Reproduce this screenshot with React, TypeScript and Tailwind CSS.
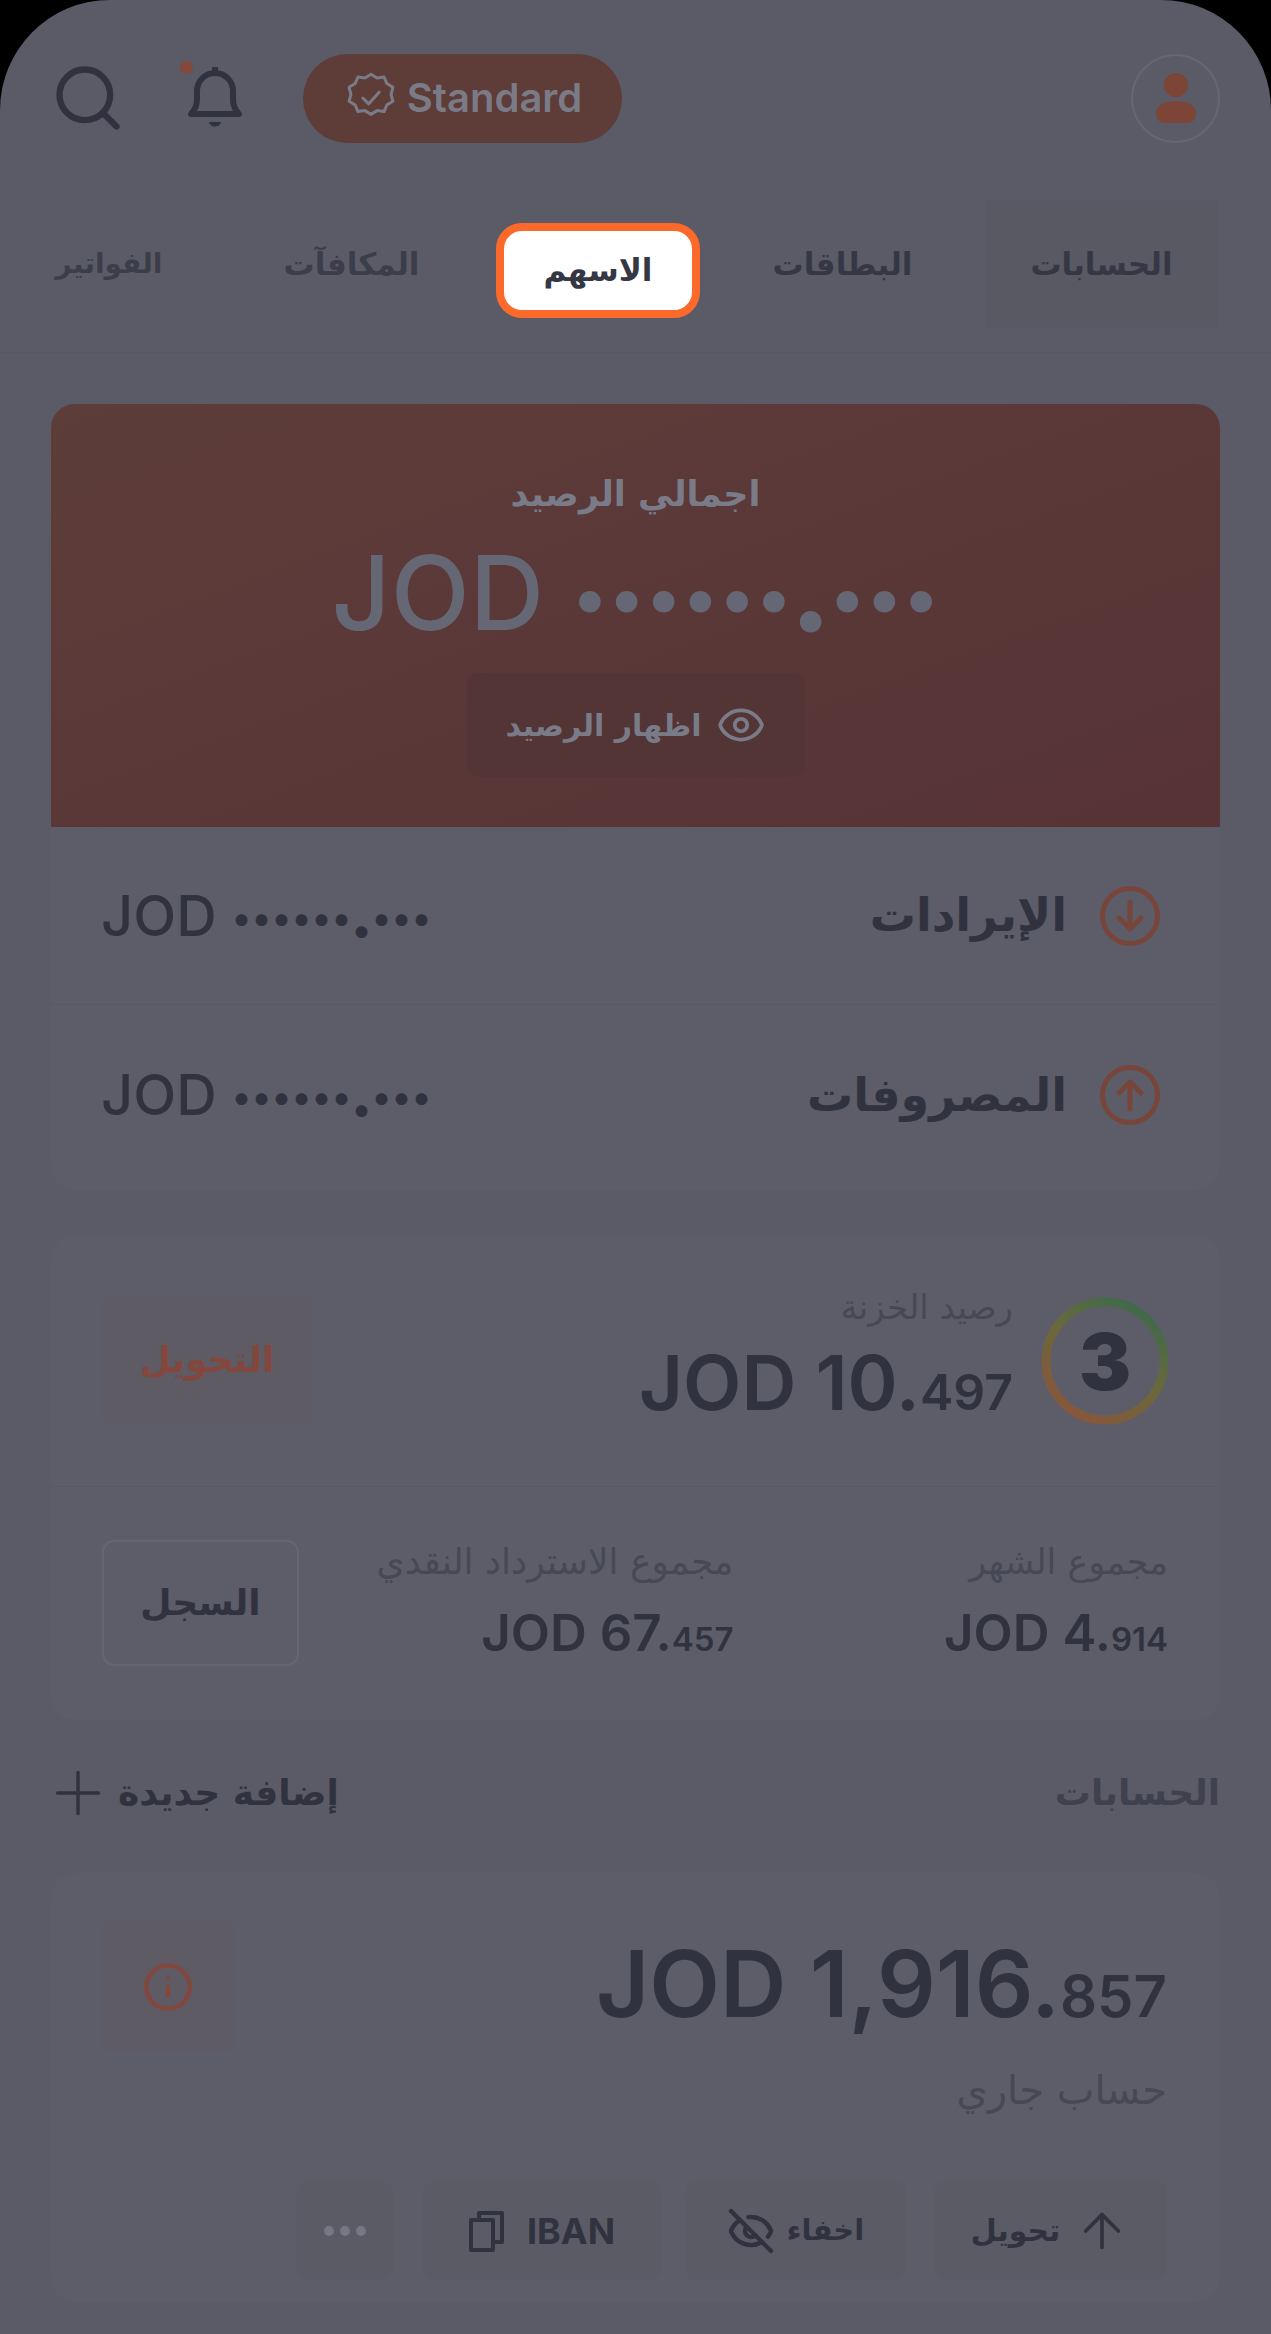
import { ArrowUp, Eye, EyeOff, Info, Plus, Search } from 'lucide-react';

const AR = "font-['DejaVu_Sans',sans-serif]";
const NUM = "font-['Inter',sans-serif]";

const TABS = [
  { label: 'الحسابات', cls: 'w-[233px] bg-[#585963] text-[31px] text-[#363744]' },
  { label: 'البطاقات', cls: 'w-[285px] text-[31px] text-[#363744]' },
  { label: 'الاسهم', cls: 'w-[204px] my-[23px] h-[95px] bg-white border-[8px] border-[#fc6a2b] rounded-[26px] text-[31px] text-[#363744]' },
  { label: 'المكافآت', cls: 'w-[289px] text-[31px] text-[#3c3d4a]' },
  { label: 'الفواتير', cls: 'w-[196px] text-[28px] text-[#3c3d4a]' },
];

function Bell() {
  return (
    <div className="relative w-[54px] h-[62px]">
      <span className="absolute -top-[6px] -left-[8px] w-[13px] h-[13px] rounded-full bg-[#84483c]" />
      <svg width="54" height="62" viewBox="0 0 54 62" fill="none" stroke="#31323f" strokeWidth="6" strokeLinejoin="round">
        <path d="M3 47 Q9 41 9 32 V24 C9 14 17 6 27 6 C37 6 45 14 45 24 V32 Q45 41 51 47 Z" />
        <path d="M27 1 V6" strokeLinecap="round" />
        <path d="M21 55 H33 C32 61 22 61 21 55 Z" fill="#31323f" strokeWidth="0" />
      </svg>
    </div>
  );
}

function Shield() {
  return (
    <svg width="56" height="56" viewBox="0 0 24 24" fill="none" stroke="#7a7b86" strokeWidth="1.3" strokeLinecap="round" strokeLinejoin="round">
      <path d="M12 1.8l2.6 1.6 3-.4 1.2 2.8 2.6 1.6-.8 3 .8 3-2.6 1.6-1.2 2.8-3-.4-2.6 1.6-2.6-1.6-3 .4-1.2-2.8-2.6-1.6.8-3-.8-3 2.6-1.6 1.2-2.8 3 .4z" />
      <path d="M8.5 12l2.5 2.5 4.5-5" />
    </svg>
  );
}

function Avatar() {
  return (
    <div className="flex items-center justify-center w-[89px] h-[89px] rounded-full border-2 border-[#666772]">
      <svg width="44" height="52" viewBox="0 0 44 52" fill="#7c4538">
        <circle cx="22" cy="13" r="12" />
        <path d="M2 42 C2 33 10 29 22 29 C34 29 42 33 42 42 C42 48 38 51 32 51 H12 C6 51 2 48 2 42 Z" />
      </svg>
    </div>
  );
}

function CircleArrow({ up }: { up?: boolean }) {
  return (
    <svg width="62" height="62" viewBox="0 0 62 62" fill="none" stroke="#78453a" strokeWidth="5" strokeLinecap="round" strokeLinejoin="round">
      <circle cx="31" cy="31" r="27.5" />
      {up ? <path d="M31 45 V18 M20 29 L31 18 L42 29" /> : <path d="M31 17 V44 M20 33 L31 44 L42 33" />}
    </svg>
  );
}

function ScoreRing() {
  return (
    <div className="relative w-[128px] h-[128px] shrink-0">
      <svg width="128" height="128" viewBox="0 0 128 128" fill="none">
        <defs>
          <linearGradient id="ring" x1="0.8" y1="0" x2="0.2" y2="1">
            <stop offset="0" stopColor="#3c6a4c" />
            <stop offset="0.45" stopColor="#68693c" />
            <stop offset="1" stopColor="#8a553c" />
          </linearGradient>
        </defs>
        <circle cx="64" cy="64" r="59" stroke="url(#ring)" strokeWidth="9" />
      </svg>
      <span className={`absolute inset-0 flex items-center justify-center ${NUM} text-[78px] font-black text-[#31323f]`}>3</span>
    </div>
  );
}

function Dots({ main, size }: { main: string; size: string }) {
  return (
    <span dir="ltr" className={`${NUM} ${main} ${size} whitespace-nowrap`}>
      JOD{' '}
      <span className="inline-block text-[0.67em] -translate-y-[0.12em]">
        ••••••<span className="inline-block translate-y-[0.3em]">•</span>•••
      </span>
    </span>
  );
}

function Money({ whole, dec, size, decSize }: { whole: string; dec: string; size: string; decSize: string }) {
  return (
    <span dir="ltr" className={`${NUM} ${size} font-semibold leading-none text-[#31323f] whitespace-nowrap`}>
      JOD {whole}.<span className={decSize}>{dec}</span>
    </span>
  );
}

function FlowRow({ title, up, last }: { title: string; up?: boolean; last?: boolean }) {
  return (
    <div className={`flex items-center justify-between pl-[50px] pr-[59px] ${last ? 'h-[185px] pb-[5px]' : 'h-[178px] border-b border-[#585965]'}`}>
      <div className="flex items-center gap-[32px]">
        <CircleArrow up={up} />
        <span className={`${AR} text-[46px] font-bold text-[#31323f]`}>{title}</span>
      </div>
      <Dots main="font-medium text-[#31323f]" size="text-[56px]" />
    </div>
  );
}

function ActionButton({ cls, children }: { cls: string; children: React.ReactNode }) {
  return (
    <div className={`flex items-center justify-center h-[99px] rounded-[12px] bg-[#5a5b65] ${cls}`}>{children}</div>
  );
}

export default function App() {
  return (
    <div dir="rtl" className="w-[1271px] h-[2334px] overflow-hidden bg-black">
      <div className="h-full rounded-t-[110px] bg-[#5a5b66]">
        {/* Header */}
        <header className="flex items-center justify-between h-[200px] pl-[50px] pr-[51px] pb-[4px]">
          <Avatar />
          <div className="flex items-center">
            <div className="flex items-center gap-[8px] h-[89px] w-[319px] justify-center rounded-full bg-[#5e3c38]" dir="ltr">
              <Shield />
              <span className={`${NUM} text-[40px] font-semibold text-[#7a7b86]`}>Standard</span>
            </div>
            <div className="mr-[61px] ml-[62px]"><Bell /></div>
            <Search size={76} color="#31323f" strokeWidth={2} />
          </div>
        </header>

        {/* Tabs */}
        <nav className="flex h-[153px] pr-[53px] border-b border-[#575862]">
          {TABS.map((tab) => (
            <div key={tab.label} className={`flex items-center justify-center self-start ${tab.label === 'الاسهم' ? '' : 'h-[128px]'} ${tab.cls}`}>
              <span className={`${AR} font-bold`}>{tab.label}</span>
            </div>
          ))}
        </nav>

        <main className="px-[51px]">
          {/* Balance */}
          <section className="mt-[51px] rounded-[24px] overflow-hidden bg-[#5c5d68]">
            <div className="flex flex-col items-center h-[423px] pt-[62px] bg-gradient-to-br from-[#5d3d3a] to-[#573335]">
              <span className={`${AR} text-[35px] font-bold leading-[56px] text-[#7a7b88]`}>اجمالي الرصيد</span>
              <div className="mt-[24px] h-[92px] flex items-center">
                <Dots main="font-medium text-[#656775]" size="text-[103px] leading-none" />
              </div>
              <div className="flex items-center justify-center gap-[14px] mt-[35px] w-[338px] h-[104px] rounded-[12px] bg-[#533536]">
                <Eye size={50} color="#7a7b88" strokeWidth={1.8} />
                <span className={`${AR} text-[30px] font-bold text-[#7a7b88]`}>اظهار الرصيد</span>
              </div>
            </div>
            <FlowRow title="الإيرادات" />
            <FlowRow title="المصروفات" up last />
          </section>

          {/* Vault */}
          <section className="mt-[45px] rounded-[24px] bg-[#5c5d68]">
            <div className="flex justify-between h-[252px] pt-[62px] pl-[51px] pr-[51px] border-b border-[#585965]">
              <div className="flex gap-[28px]">
                <ScoreRing />
                <div className="flex flex-col items-start">
                  <span className={`${AR} -mt-[4px] text-[34px] leading-[28px] text-[#474855]`}>رصيد الخزنة</span>
                  <span className="mt-[23px]">
                    <Money whole="10" dec="497" size="text-[76px]" decSize="text-[50px]" />
                  </span>
                </div>
              </div>
              <div className="flex items-center justify-center w-[210px] h-[126px] rounded-[8px] bg-[#5e5b64]">
                <span className={`${AR} text-[36px] font-bold text-[#83473d]`}>التحويل</span>
              </div>
            </div>
            <div className="flex justify-between h-[233px] pt-[53px] pl-[51px] pr-[52px]">
              <div className="flex flex-col items-start w-[435px]">
                <span className={`${AR} text-[35px] leading-[44px] text-[#474855]`}>مجموع الشهر</span>
                <span className="mt-[23px]">
                  <Money whole="4" dec="914" size="text-[51px]" decSize="text-[33px]" />
                </span>
              </div>
              <div className="flex flex-col items-start w-[435px]">
                <span className={`${AR} text-[36px] leading-[44px] text-[#474855]`}>مجموع الاسترداد النقدي</span>
                <span className="mt-[23px]">
                  <Money whole="67" dec="457" size="text-[51px]" decSize="text-[33px]" />
                </span>
              </div>
              <div className="flex items-center justify-center w-[197px] h-[126px] rounded-[12px] border-2 border-[#656672]">
                <span className={`${AR} text-[36px] font-bold text-[#31323f]`}>السجل</span>
              </div>
            </div>
          </section>

          {/* Accounts */}
          <div className="flex items-center justify-between h-[153px] pb-[7px]">
            <span className={`${AR} text-[36px] font-bold text-[#40414f]`}>الحسابات</span>
            <div className="flex items-center gap-[5px] -ml-[8px]">
              <span className={`${AR} text-[36px] font-bold text-[#31323f]`}>إضافة جديدة</span>
              <Plus size={70} color="#31323f" strokeWidth={1.2} />
            </div>
          </div>

          <section className="h-[429px] rounded-[24px] bg-[#5c5d68] pt-[49px] pl-[50px] pr-[53px]">
            <div className="flex justify-between h-[130px]">
              <div className="flex flex-col items-start pt-[16px]">
                <Money whole="1,916" dec="857" size="text-[92px]" decSize="text-[58px]" />
                <span className={`${AR} mt-[30px] text-[40px] font-medium text-[#474855]`}>حساب جاري</span>
              </div>
              <div className="flex items-center justify-center w-[134px] h-[130px] rounded-[8px] bg-[#5e5b64]">
                <Info size={52} color="#83473d" strokeWidth={2} />
              </div>
            </div>
            <div className="flex items-center mt-[129px]">
              <ActionButton cls="w-[233px] gap-[14px]">
                <ArrowUp size={56} color="#31323f" strokeWidth={1.6} />
                <span className={`${AR} text-[30px] font-bold text-[#31323f]`}>تحويل</span>
              </ActionButton>
              <ActionButton cls="w-[221px] mr-[28px] gap-[12px]">
                <span className={`${AR} text-[29px] font-bold text-[#31323f]`}>اخفاء</span>
                <EyeOff size={48} color="#31323f" strokeWidth={2.2} />
              </ActionButton>
              <ActionButton cls="w-[238px] mr-[24px] gap-[22px]">
                <span className={`${NUM} text-[36px] font-bold text-[#31323f]`}>IBAN</span>
                <svg width="36" height="42" viewBox="0 0 36 42" fill="none" stroke="#31323f" strokeWidth="4" strokeLinejoin="round">
                  <path d="M2 10 H24 V40 H2 Z" />
                  <path d="M10 10 V3 H33 V32 H24" />
                </svg>
              </ActionButton>
              <ActionButton cls="w-[97px] mr-[30px] gap-[6px]">
                <span className="w-[10px] h-[10px] rounded-full bg-[#767784]" />
                <span className="w-[10px] h-[10px] rounded-full bg-[#767784]" />
                <span className="w-[10px] h-[10px] rounded-full bg-[#767784]" />
              </ActionButton>
            </div>
          </section>
        </main>
      </div>
    </div>
  );
}
